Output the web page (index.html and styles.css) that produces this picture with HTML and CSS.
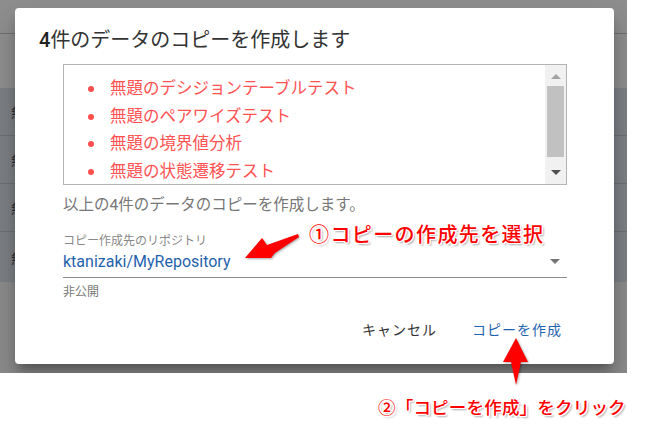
FILE: index.html
```html
<!DOCTYPE html>
<html lang="ja">
<head>
<meta charset="utf-8">
<link rel="stylesheet" href="styles.css">
</head>
<body>
<div class="stage">
  <div class="backdrop">
    <div class="bd-head"><div class="bd-head-top"></div></div>
    <div class="bd-row"><span class="bd-txt">無</span></div>
    <div class="bd-row"><span class="bd-txt">無</span></div>
    <div class="bd-row"><span class="bd-txt">無</span></div>
    <div class="bd-row"><span class="bd-txt">無</span></div>
  </div>

  <div class="dialog">
    <div class="title"><span class="num">4</span>件のデータのコピーを作成します</div>
    <div class="content">
      <div class="listbox">
        <ul class="items">
          <li>無題のデシジョンテーブルテスト</li>
          <li>無題のペアワイズテスト</li>
          <li>無題の境界値分析</li>
          <li>無題の状態遷移テスト</li>
        </ul>
        <div class="scrollbar">
          <div class="sb-up"></div>
          <div class="sb-thumb"></div>
          <div class="sb-down"></div>
        </div>
      </div>
      <div class="desc">以上の4件のデータのコピーを作成します。</div>
      <div class="field">
        <div class="label">コピー作成先のリポジトリ</div>
        <div class="select">
          <span class="value">ktanizaki/MyRepository</span>
          <span class="caret"></span>
        </div>
      </div>
      <div class="hint">非公開</div>
    </div>
    <div class="actions">
      <span class="btn">キャンセル</span>
      <span class="btn primary">コピーを作成</span>
    </div>
  </div>
</div>

<svg class="arrow1" width="70" height="40" viewBox="0 0 70 40">
  <polygon points="5,33 22,13 27,20 58,9 59,12 35,28 31,33" fill="#ff0000"/>
</svg>
<div class="note note1">①コピーの作成先を選択</div>

<svg class="arrow2" width="40" height="56" viewBox="0 0 40 56">
  <polygon points="20,2 32,26 25,26 20,49 15,26 7,26" fill="#ff0000"/>
</svg>
<div class="note note2">②「コピーを作成」をクリック</div>
</body>
</html>
```

FILE: styles.css
```css
* { box-sizing: border-box; }
html, body { margin: 0; padding: 0; }
body {
  width: 662px;
  height: 439px;
  background: #ffffff;
  font-family: Roboto, "Noto Sans CJK JP", sans-serif;
  position: relative;
  overflow: hidden;
}
.stage {
  position: relative;
  width: 627px;
  height: 373px;
  background: #8a8a8a;
  overflow: hidden;
}
.backdrop {
  display: flex;
  flex-direction: column;
}
.bd-head {
  height: 88px;
  background: #8d8d8d;
}
.bd-head-top {
  height: 34px;
  border-bottom: 1px solid #6e6e6e;
}
.bd-row {
  height: 48px;
  background: #7b7e83;
  border-bottom: 1px solid #6b6e73;
  display: flex;
  align-items: center;
  padding-left: 11px;
}
.bd-row:last-child { border-bottom: none; height: 50px; }
.bd-txt {
  font-size: 13px;
  color: #2e3035;
}

.dialog {
  position: absolute;
  left: 15px;
  top: 8px;
  width: 599px;
  height: 356px;
  background: #ffffff;
  border-radius: 4px;
  box-shadow: 0 8px 10px -4px rgba(0,0,0,0.3), 0 14px 22px 2px rgba(0,0,0,0.18);
  padding-top: 20px;
  display: flex;
  flex-direction: column;
}
.title {
  padding: 0 24px;
  font-size: 20px;
  line-height: 24px;
  color: #333333;
}
.title .num { font-weight: 500; color: #222222; }
.content {
  margin: 12px 47px 0 48px;
  display: flex;
  flex-direction: column;
}
.listbox {
  height: 121px;
  border: 1px solid #b4b4b4;
  display: flex;
}
.items {
  flex: 1;
  margin: 0;
  padding: 10px 0 0 46px;
  list-style: none;
}
.items li {
  position: relative;
  font-size: 16.5px;
  line-height: 27.5px;
  color: #ff5252;
  white-space: nowrap;
}
.items li::before {
  content: "";
  position: absolute;
  left: -22px;
  top: 11px;
  width: 6px;
  height: 6px;
  border-radius: 50%;
  background: #ff4f4f;
}
.scrollbar {
  width: 21px;
  background: #f1f1f1;
  display: flex;
  flex-direction: column;
  align-items: center;
}
.sb-up {
  margin-top: 9px;
  width: 0; height: 0;
  border-left: 5px solid transparent;
  border-right: 5px solid transparent;
  border-bottom: 5px solid #a3a3a3;
}
.sb-thumb {
  margin-top: 7px;
  width: 17px;
  height: 71px;
  background: #c1c1c1;
}
.sb-down {
  margin-top: 13px;
  width: 0; height: 0;
  border-left: 5px solid transparent;
  border-right: 5px solid transparent;
  border-top: 5px solid #505050;
}
.desc {
  margin-top: 10px;
  font-size: 15.5px;
  line-height: 20px;
  color: #777777;
  white-space: nowrap;
}
.field {
  margin-top: 18px;
  border-bottom: 1px solid #8c8c8c;
  padding-bottom: 4px;
}
.label {
  font-size: 12px;
  line-height: 16px;
  color: #888888;
}
.select {
  display: flex;
  align-items: center;
  justify-content: space-between;
  height: 24px;
}
.value {
  font-size: 16px;
  color: #1f63ad;
}
.caret {
  margin-right: 7px;
  width: 0; height: 0;
  border-left: 5px solid transparent;
  border-right: 5px solid transparent;
  border-top: 5px solid #757575;
}
.hint {
  margin-top: 6px;
  font-size: 12px;
  line-height: 16px;
  color: #777777;
}
.actions {
  margin-top: 11px;
  height: 36px;
  display: flex;
  justify-content: flex-end;
  align-items: center;
  gap: 35px;
  padding-right: 52px;
}
.btn {
  font-size: 14px;
  letter-spacing: 1px;
  color: #333333;
}
.btn.primary { color: #1f63ad; }

.arrow1 {
  position: absolute;
  left: 240px;
  top: 225px;
  filter: drop-shadow(1px 1px 1px rgba(0,0,0,0.35));
}
.arrow2 {
  position: absolute;
  left: 496px;
  top: 336px;
  filter: drop-shadow(1px 1px 1px rgba(0,0,0,0.35));
}
.note {
  position: absolute;
  color: #ff0000;
  font-family: "Noto Sans CJK JP", sans-serif;
  font-weight: 500;
  white-space: nowrap;
  text-shadow:
    -1px -1px 0 #fff, 1px -1px 0 #fff, -1px 1px 0 #fff, 1px 1px 0 #fff,
    0 -1px 0 #fff, 0 1px 0 #fff, -1px 0 0 #fff, 1px 0 0 #fff,
    2px 2px 2px rgba(0,0,0,0.35);
}
.note1 {
  left: 309px;
  top: 219px;
  font-size: 20px;
  line-height: 30px;
  letter-spacing: 1.4px;
}
.note2 {
  left: 378px;
  top: 393px;
  font-size: 17.5px;
  line-height: 28px;
  letter-spacing: 0.2px;
}
```
